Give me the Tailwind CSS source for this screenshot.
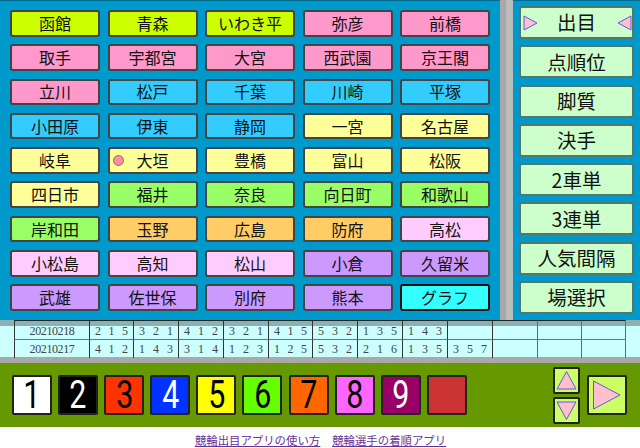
<!DOCTYPE html>
<html lang="ja">
<head>
  <meta charset="UTF-8" />
  <title>競輪出目</title>
  <script src="https://cdn.jsdelivr.net/npm/@tailwindcss/browser@4"></script>
</head>
<body class="bg-white w-[640px] h-[448px] overflow-hidden font-['Noto_Sans_CJK_JP',sans-serif] text-[#111]">

  <!-- Top: venue grid + menu -->
  <div class="flex h-[320px]">
    <div id="venues" class="w-[500px] bg-[#0099cc] border-t border-[#006b8f] px-[10px] pt-[9px] grid grid-cols-5 gap-x-[7.5px] gap-y-[7.8px] grid-rows-[repeat(9,26.5px)]"></div>
    <div class="w-[13px] flex">
      <div class="w-[6px] bg-[#a8a8a8]"></div>
      <div class="w-[7px] bg-[#bcbcbc]"></div>
    </div>
    <div id="menu" class="w-[127px] bg-[#0099cc] border-t border-[#006b8f] px-[6px] pt-[5px] grid gap-y-[6.3px] grid-rows-[repeat(8,33px)]"></div>
  </div>

  <!-- Results table -->
  <div class="h-[37px] bg-[#ccffff] font-['Liberation_Serif',serif] text-[12px] text-[#444]">
    <div id="band" class="h-[6px] bg-[#8fb0b0]"></div>
    <div id="rows"></div>
  </div>
  <div class="h-[6px] bg-[#a9a9a9]"></div>

  <!-- Number pad -->
  <div class="h-[64px] bg-[#669900] flex items-center pl-[12px] relative">
    <div id="pad" class="flex gap-x-[6.1px]"></div>
    <div class="ml-[86px] flex flex-col gap-y-[3px]">
      <button class="w-[27px] h-[27px] bg-[#ccff66] border-2 border-[#222] rounded-[2px] flex items-center justify-center">
        <svg width="21" height="21" viewBox="0 0 21 21"><polygon points="10.5,1.5 20,19 1,19" fill="#ffc0cb" stroke="#5a5ae6"/></svg>
      </button>
      <button class="w-[27px] h-[27px] bg-[#ccff66] border-2 border-[#222] rounded-[2px] flex items-center justify-center">
        <svg width="21" height="21" viewBox="0 0 21 21"><polygon points="1,2 20,2 10.5,19.5" fill="#ffc0cb" stroke="#5a5ae6"/></svg>
      </button>
    </div>
    <button class="ml-[7px] w-[40px] h-[40px] bg-[#ccff66] border-2 border-[#222] rounded-[2px] flex items-center justify-center">
      <svg width="36" height="36" viewBox="0 0 36 36"><polygon points="4.5,4 31,18 4.5,32" fill="#ffc0cb" stroke="#5a5ae6"/></svg>
    </button>
  </div>

  <!-- Links -->
  <div class="h-[21px] flex justify-center gap-x-[12px] pl-[1px] text-[11.4px] leading-[26px] text-[#663399] underline">
    <a href="#">競輪出目アプリの使い方</a>
    <a href="#">競輪選手の着順アプリ</a>
  </div>

  <script>
    const base = "relative flex items-center justify-center border-2 rounded-[3px] text-[16px] pb-[1px] ";
    const dark = "border-[#444] ";
    const venues = [
      ["函館", "bg-[#ccff00]"], ["青森", "bg-[#ccff00]"], ["いわき平", "bg-[#ccff00]"], ["弥彦", "bg-[#ff99cc]"], ["前橋", "bg-[#ff99cc]"],
      ["取手", "bg-[#ff99cc]"], ["宇都宮", "bg-[#ff99cc]"], ["大宮", "bg-[#ff99cc]"], ["西武園", "bg-[#ff99cc]"], ["京王閣", "bg-[#ff99cc]"],
      ["立川", "bg-[#ff99cc]"], ["松戸", "bg-[#33ccff]"], ["千葉", "bg-[#33ccff]"], ["川崎", "bg-[#33ccff]"], ["平塚", "bg-[#33ccff]"],
      ["小田原", "bg-[#33ccff]"], ["伊東", "bg-[#33ccff]"], ["静岡", "bg-[#33ccff]"], ["一宮", "bg-[#ffff99]"], ["名古屋", "bg-[#ffff99]"],
      ["岐阜", "bg-[#ffff99]"], ["大垣", "bg-[#ffff99]"], ["豊橋", "bg-[#ffff99]"], ["富山", "bg-[#ffff99]"], ["松阪", "bg-[#ffff99]"],
      ["四日市", "bg-[#ffff99]"], ["福井", "bg-[#99ff66]"], ["奈良", "bg-[#99ff66]"], ["向日町", "bg-[#99ff66]"], ["和歌山", "bg-[#99ff66]"],
      ["岸和田", "bg-[#99ff66]"], ["玉野", "bg-[#ffcc66]"], ["広島", "bg-[#ffcc66]"], ["防府", "bg-[#ffcc66]"], ["高松", "bg-[#ffccff]"],
      ["小松島", "bg-[#ffccff]"], ["高知", "bg-[#ffccff]"], ["松山", "bg-[#ffccff]"], ["小倉", "bg-[#cc99ff]"], ["久留米", "bg-[#cc99ff]"],
      ["武雄", "bg-[#cc99ff]"], ["佐世保", "bg-[#cc99ff]"], ["別府", "bg-[#cc99ff]"], ["熊本", "bg-[#cc99ff]"], ["グラフ", "bg-[#33ffff]"],
    ];
    document.getElementById("venues").innerHTML = venues.map(([name, color]) => {
      const border = name === "グラフ" ? "border-[#111] " : dark;
      const dot = name === "大垣" ? '<span class="absolute left-[3px] top-[6px] w-[11px] h-[11px] rounded-full bg-[#ff8f9f] border border-[#777]"></span>' : "";
      return `<button class="${base}${border}${color}">${dot}${name}</button>`;
    }).join("");

    const tri = (side) => side === "l"
      ? '<svg class="absolute left-[1px] top-[7px]" width="16" height="16" viewBox="0 0 16 16"><polygon points="2,1 15,8 2,15" fill="#ffc0cb" stroke="#5a5ae6"/></svg>'
      : '<svg class="absolute right-[-1px] top-[7px]" width="16" height="16" viewBox="0 0 16 16"><polygon points="14,1 1,8 14,15" fill="#ffc0cb" stroke="#5a5ae6"/></svg>';
    const menu = ["出目", "点順位", "脚質", "決手", "2車単", "3連単", "人気間隔", "場選択"];
    document.getElementById("menu").innerHTML = menu.map((name, i) =>
      `<button class="relative flex items-center justify-center bg-[#ccffcc] border-2 border-[#557766] rounded-[3px] text-[19.5px] pb-[1px]">${i === 0 ? tri("l") + tri("r") : ""}${name}</button>`
    ).join("");

    // widths of the table columns: blank, date, the result cells, blank
    const cols = "grid grid-cols-[14px_76px_44px_45px_45px_45px_44px_45px_45px_45px_45px_45px_44px_44px_14px]";
    const blank = ["", "", "", "", "", "", "", "", "", "", "", "", ""];
    const rows = [
      ["20210218", "2 1 5", "3 2 1", "4 1 2", "3 2 1", "4 1 5", "5 3 2", "1 3 5", "1 4 3", "", "", "", ""],
      ["20210217", "4 1 2", "1 4 3", "3 1 4", "1 2 3", "1 2 5", "5 3 2", "2 1 6", "1 3 5", "3 5 7", "", "", ""],
    ];
    const rowClass = ["h-[14px] leading-[11px]", "h-[17px] leading-[18px]"];
    const rowLine = ["border-b border-[#667777]", ""];
    const renderRow = (row, box, cls) => {
      const cells = row.map((text, i) => {
        if (i === 0) return `<div class="${box} border-x border-x-[#333] text-center tracking-[-0.4px]">${text}</div>`;
        const line = i > 9 ? "border-r-[#667]" : "border-r-[#333]";
        const parts = text ? text.split(" ").map(d => `<span>${d}</span>`).join("") : "";
        return `<div class="${box} border-r ${line} flex justify-between px-[5px]">${parts}</div>`;
      }).join("");
      return `<div class="${cols} ${cls}"><div></div>${cells}<div></div></div>`;
    };
    document.getElementById("band").innerHTML = renderRow(blank, "border-t border-[#222]", "h-[6px]");
    document.getElementById("rows").innerHTML = rows.map((row, r) => renderRow(row, rowLine[r], rowClass[r])).join("");

    const pad = [
      ["1", "bg-white text-black"], ["2", "bg-black text-white"], ["3", "bg-[#ff3300] text-black"],
      ["4", "bg-[#0033ff] text-white"], ["5", "bg-[#ffff00] text-black"], ["6", "bg-[#66ff00] text-black"],
      ["7", "bg-[#ff6600] text-black"], ["8", "bg-[#ff66ff] text-black"], ["9", "bg-[#990066] text-white"], ["", "bg-[#cc3333]"],
    ];
    document.getElementById("pad").innerHTML = pad.map(([n, color]) =>
      `<button class="w-[40px] h-[40px] border-2 border-[#222] rounded-[2px] flex items-center justify-center font-['Roboto',sans-serif] text-[38px] ${color}"><span class="inline-block scale-x-[.8]">${n}</span></button>`
    ).join("");
  </script>
</body>
</html>
